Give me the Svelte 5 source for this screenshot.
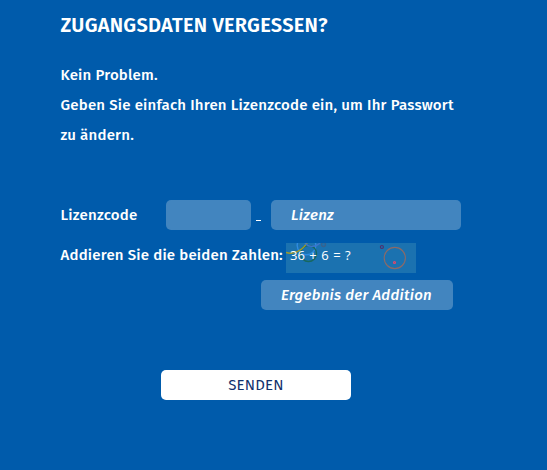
<script>

let license = ['', '']
let result = ''

const numbers = [36, 6]

</script>


<!--  password form   -->

<main>
  <h1>ZUGANGSDATEN VERGESSEN?</h1>

  <p class="intro">
    Kein Problem.<br />
    Geben Sie einfach Ihren Lizenzcode ein, um Ihr Passwort<br />
    zu ändern.
  </p>

  <form on:submit|preventDefault>
    <div class="row">
      <label for="code">Lizenzcode</label>
      <input id="code" class="prefix" type="text" bind:value={license[0]} />
      <span class="dash"></span>
      <input class="number" type="text" placeholder="Lizenz" aria-label="Lizenz" bind:value={license[1]} />
    </div>

    <div class="row">
      <label class="question" for="result">Addieren Sie die beiden Zahlen:</label>
      <div class="captcha">
        <svg width="130" height="30" viewBox="0 0 130 30" fill="none">
          <circle cx="20.5" cy="2.5" r="9.3" stroke="#2f8be0" stroke-width="1.4" />
          <circle cx="22.5" cy="10.5" r="8" stroke="#17685f" stroke-width="1.4" />
          <path d="M0 9.5C7 12 16 8 21 0" stroke="#a29b27" stroke-width="1.4" />
          <path d="M19 0c3 4 10 5 15 0" stroke="#3d74cd" stroke-width="1.4" />
          <circle cx="37.5" cy="1.5" r="2" stroke="#37628e" stroke-width="1.3" />
          <circle cx="95.9" cy="4" r="1.5" stroke="#4f2f6d" stroke-width="1.2" />
          <circle cx="108.8" cy="15" r="10.6" stroke="#8b6a68" stroke-width="1.1" />
          <circle cx="108.5" cy="19.5" r="1" stroke="#e0476b" stroke-width="1.2" />
        </svg>
        <span>{numbers[0]} + {numbers[1]} = ?</span>
      </div>
    </div>

    <input id="result" class="result" type="text" placeholder="Ergebnis der Addition" bind:value={result} />

    <button type="submit">SENDEN</button>
  </form>
</main>

<!--         -->


<style>

  :global(body) {
    background: #005bab;
  }

  main {
    box-sizing: border-box;
    width: 547px;
    height: 470px;
    padding: 10px 60px 0 60.5px;
    overflow: hidden;
    background: #005bab;
    color: white;
    font: 500 15px/30px 'Fira Sans', 'Noto Sans', sans-serif;
    letter-spacing: 0.21px;
  }

  h1 {
    margin: 0 0 20px;
    font-size: 20px;
    font-weight: 600;
    line-height: 30px;
    letter-spacing: 0.25px;
    white-space: nowrap;
  }

  .intro {
    margin: 0 0 50px;
    white-space: nowrap;
  }

  .row {
    display: flex;
    height: 30px;
    margin-bottom: 10px;
    white-space: nowrap;
  }

  label {
    width: 105.5px;
  }

  .question {
    width: 225.5px;
  }

  input {
    box-sizing: border-box;
    height: 30px;
    margin: 0;
    padding: 0 20px;
    border: none;
    border-radius: 5px;
    background: #4285bf;
    color: white;
    font: inherit;
    letter-spacing: inherit;
    outline: none;
  }

  input::placeholder {
    color: white;
    font-style: italic;
    letter-spacing: 0.28px;
    opacity: 1;
  }

  .prefix {
    width: 85px;
  }

  .dash {
    width: 5px;
    height: 1px;
    margin: 20px 10px 0 5px;
    background: white;
  }

  .number {
    width: 190px;
  }

  .captcha {
    position: relative;
    width: 130px;
    height: 30px;
    margin-top: 3px;
    background: #1b72b0;
  }

  .captcha svg {
    display: block;
  }

  .captcha span {
    position: absolute;
    top: -3px;
    left: 4px;
    font-family: 'Open Sans', sans-serif;
    font-size: 13px;
    font-weight: 400;
    letter-spacing: 0;
    word-spacing: 1.1px;
  }

  .result {
    display: block;
    width: 192px;
    margin-left: 200.5px;
  }

  button {
    display: block;
    width: 190px;
    height: 30px;
    margin: 60px 0 0 100.5px;
    padding: 0;
    border: none;
    border-radius: 5px;
    background: white;
    color: #12316d;
    font: inherit;
    font-weight: 400;
    letter-spacing: inherit;
    cursor: pointer;
  }

</style>
